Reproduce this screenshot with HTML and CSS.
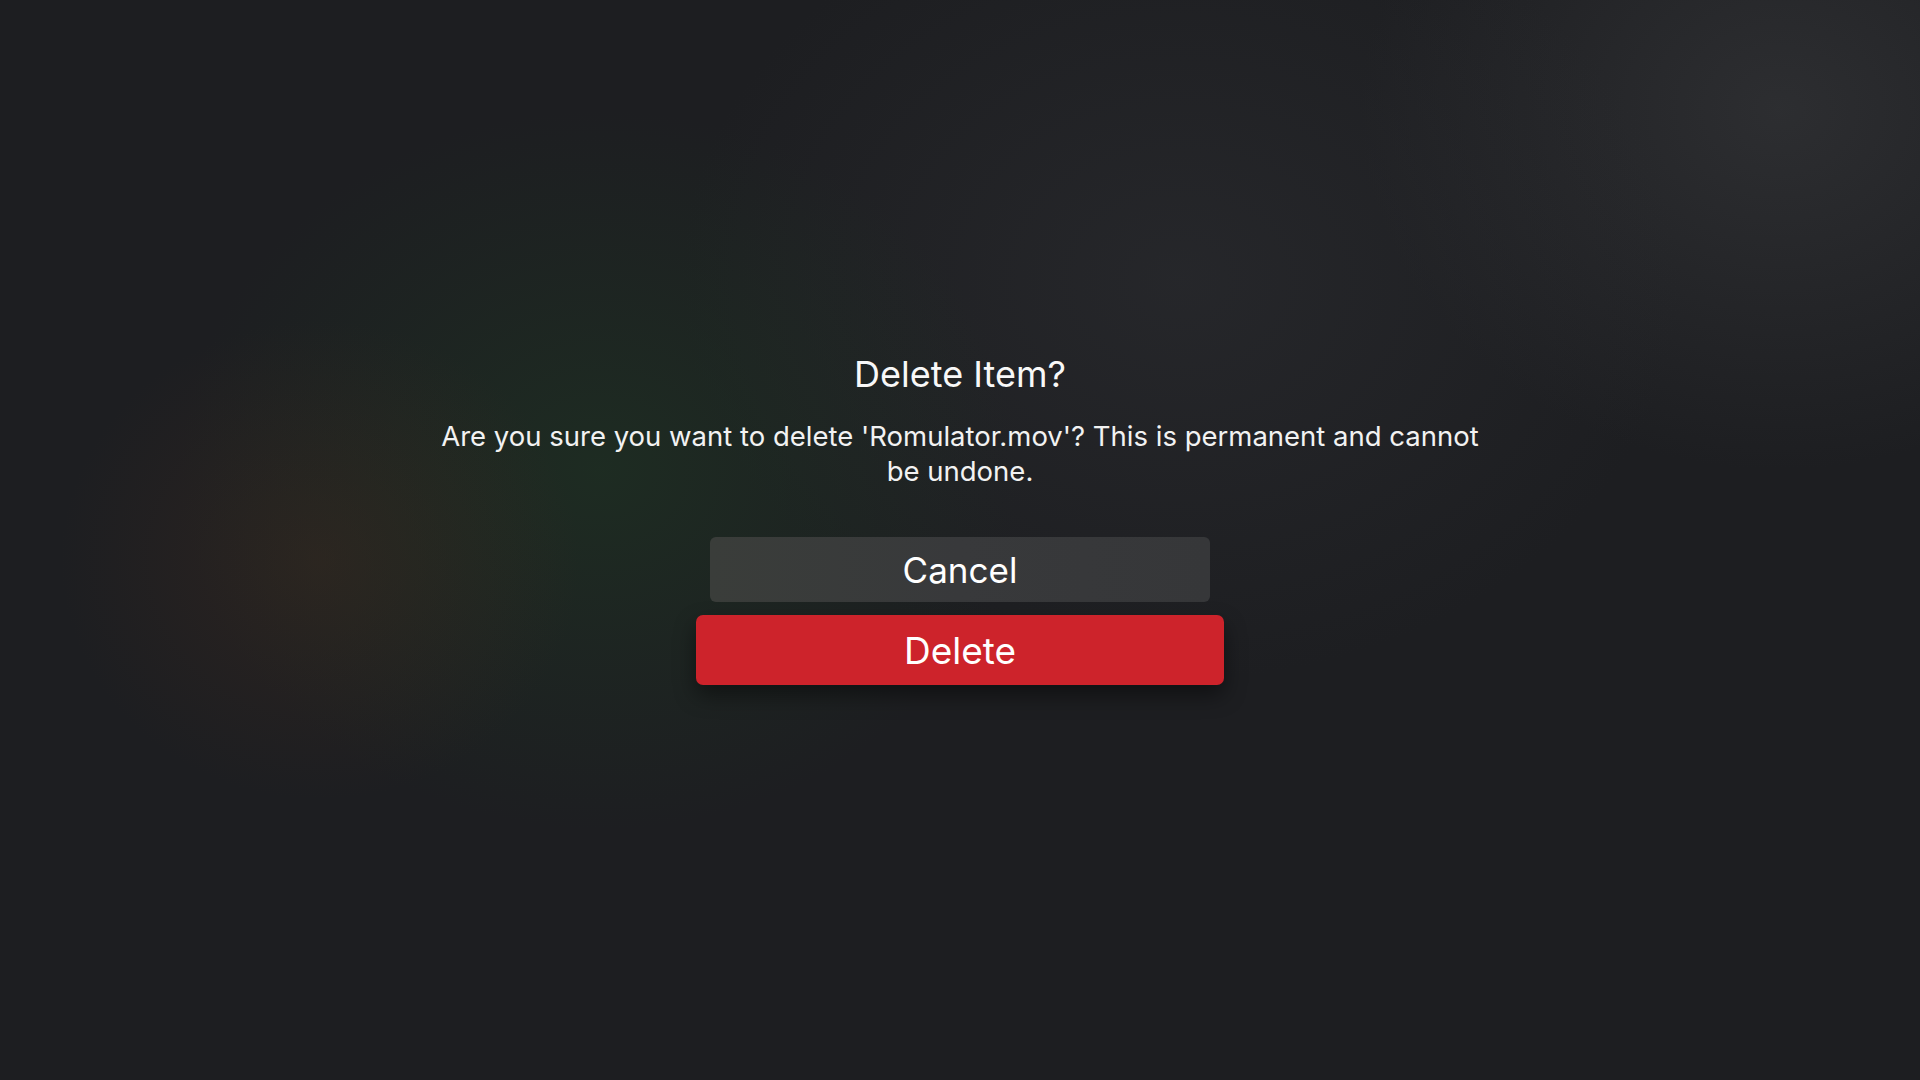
FILE: index.html
```html
<!DOCTYPE html>
<html lang="en">
<head>
<meta charset="utf-8">
<title>Delete Item?</title>
<link rel="stylesheet" href="styles.css">
</head>
<body>
<main class="screen">
  <section class="alert">
    <h1 class="alert-title">Delete Item?</h1>
    <p class="alert-message">Are you sure you want to delete 'Romulator.mov'? This is permanent and cannot be undone.</p>
    <div class="alert-actions">
      <button class="btn btn-cancel">Cancel</button>
      <button class="btn btn-delete">Delete</button>
    </div>
  </section>
</main>
</body>
</html>
```
FILE: styles.css
```css
* { box-sizing: border-box; }
html, body { margin: 0; padding: 0; height: 100%; }
body {
  font-family: Inter, "Noto Sans", "Liberation Sans", sans-serif;
  color: #fff;
  background-color: #1d1e21;
  background-image:
    radial-gradient(ellipse 260px 240px at 320px 560px, rgba(70, 45, 30, 0.35), rgba(70, 45, 30, 0) 100%),
    radial-gradient(ellipse 420px 360px at 600px 470px, rgba(30, 55, 35, 0.55), rgba(30, 55, 35, 0) 100%),
    radial-gradient(ellipse 500px 400px at 1180px 280px, rgba(45, 46, 50, 0.55), rgba(45, 46, 50, 0) 100%),
    radial-gradient(ellipse 420px 360px at 1780px 110px, rgba(50, 51, 54, 0.75), rgba(50, 51, 54, 0) 100%);
  overflow: hidden;
}
.screen {
  width: 1920px;
  height: 1080px;
  display: flex;
  justify-content: center;
}
.alert {
  display: flex;
  flex-direction: column;
  align-items: center;
  padding-top: 353px;
}
.alert-title {
  margin: 0;
  font-size: 36px;
  line-height: 42px;
  font-weight: 400;
  color: #f8f8f8;
}
.alert-message {
  margin: 24px 0 0;
  width: 1052px;
  text-align: center;
  font-size: 27.5px;
  line-height: 35px;
  font-weight: 400;
  color: #f2f2f2;
}
.alert-actions {
  margin-top: 48px;
  display: flex;
  flex-direction: column;
  align-items: center;
  gap: 13px;
}
.btn {
  border: none;
  font-family: inherit;
  color: #fff;
  display: flex;
  align-items: center;
  justify-content: center;
  padding: 0;
}
.btn-cancel {
  width: 500px;
  height: 65px;
  border-radius: 6px;
  background: linear-gradient(90deg, #3a3d3a 0%, #38393b 50%, #363739 100%);
  font-size: 35px;
  font-weight: 400;
}
.btn-delete {
  width: 528px;
  height: 70px;
  border-radius: 7px;
  background: #cd232b;
  font-size: 37px;
  font-weight: 400;
  box-shadow: 0 10px 22px rgba(0, 0, 0, 0.45);
}
```
